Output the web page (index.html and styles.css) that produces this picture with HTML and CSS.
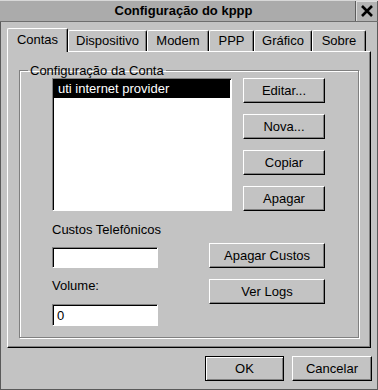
FILE: index.html
```html
<!DOCTYPE html>
<html lang="pt-BR">
<head>
<meta charset="utf-8">
<title>Configuração do kppp</title>
<link rel="stylesheet" href="styles.css">
</head>
<body>
<div class="window">
  <div class="titlebar">
    <div class="title">Configuração do kppp</div>
    <div class="close">
      <svg width="14" height="14" viewBox="0 0 14 14"><path d="M2 2 L12 12 M12 2 L2 12" stroke="#000" stroke-width="2.6" fill="none"/></svg>
    </div>
  </div>
  <div class="body">
    <ul class="tabs">
      <li class="tab active t-contas">Contas</li>
      <li class="tab t-disp">Dispositivo</li>
      <li class="tab t-modem">Modem</li>
      <li class="tab t-ppp">PPP</li>
      <li class="tab t-graf">Gráfico</li>
      <li class="tab t-sobre">Sobre</li>
    </ul>
    <div class="panel">
      <fieldset class="group">
        <legend>Configuração da Conta</legend>
        <div class="group-body">
          <div class="top-row">
            <div class="list">
              <div class="item selected">uti internet provider</div>
            </div>
            <div class="btncol">
              <div class="btn">Editar...</div>
              <div class="btn">Nova...</div>
              <div class="btn">Copiar</div>
              <div class="btn">Apagar</div>
            </div>
          </div>
          <div class="bottom-row">
            <div class="fields">
              <div class="lbl">Custos Telefônicos</div>
              <input class="field" type="text" value="">
              <div class="lbl lbl2">Volume:</div>
              <input class="field field2" type="text" value="0">
            </div>
            <div class="btncol wide">
              <div class="btn">Apagar Custos</div>
              <div class="btn">Ver Logs</div>
            </div>
          </div>
        </div>
      </fieldset>
    </div>
    <div class="dialog-buttons">
      <div class="btn default ok">OK</div>
      <div class="btn cancel">Cancelar</div>
    </div>
  </div>
</div>
</body>
</html>
```

FILE: styles.css
```css
* { margin:0; padding:0; box-sizing:border-box; }
body { width:378px; height:390px; background:#c3c3c3; font:13px/16px "Liberation Sans", Helvetica, Arial, sans-serif; color:#000; overflow:hidden; }

.window { width:378px; height:390px; border:1px solid #5a5a5a; border-top:0; background:#c3c3c3; display:flex; flex-direction:column; }

.titlebar { height:22px; display:flex; background:#ababab; border-top:1px solid #d8d8d8; border-bottom:1px solid #6e6e6e; margin:0 -1px; }
.title { flex:1; text-align:center; font-weight:bold; line-height:20px; padding-left:12px; }
.close { width:23px; display:flex; align-items:center; justify-content:center; border-left:1px solid #5c5c5c; border-right:1px solid #5c5c5c; background:#b3b3b3; box-shadow:inset 1px 1px #dcdcdc; }

.body { flex:1; padding:6px 6px 0 6px; display:flex; flex-direction:column; }

.tabs { list-style:none; display:flex; align-items:flex-end; height:23px; position:relative; z-index:1; }
.tab { height:21px; line-height:20px; text-align:center; border:1px solid #fff; border-bottom:0; border-right:1px solid #000; box-shadow:inset -1px 0 #808080; border-radius:2px 2px 0 0; background:#c3c3c3; }
.tab.active { height:24px; margin-bottom:-1px; line-height:22px; }
.t-contas { width:61px; }
.t-disp { width:79px; }
.t-modem { width:62px; }
.t-ppp { width:45px; }
.t-graf { width:58px; }
.t-sobre { width:54px; }

.panel { height:297px; border:1px solid; border-color:#fff #000 #000 #fff; box-shadow:inset -1px -1px #808080; padding:11px 11px 9px 11px; display:flex; flex-direction:column; }

.group { flex:1; border:1px solid #808080; box-shadow:1px 1px #fff, inset 1px 1px #fff; min-width:0; }
.group legend { margin-left:8px; padding:0 2px; line-height:15px; }
.group-body { padding:0 33px 0 32px; }

.top-row { display:flex; }
.list { width:180px; height:133px; background:#fff; border:1px solid; border-color:#808080 #fff #fff #808080; box-shadow:inset 1px 1px #000; padding:1px 1px 0 1px; }
.item { height:18px; line-height:18px; padding-left:4px; white-space:nowrap; }
.item.selected { background:#000; color:#fff; }

.btncol { display:flex; flex-direction:column; gap:11px; width:82px; margin-left:11px; }
.btn { height:25px; line-height:23px; text-align:center; background:#c3c3c3; border:1px solid; border-color:#fff #000 #000 #fff; box-shadow:inset -1px -1px #808080; white-space:nowrap; }

.bottom-row { display:flex; justify-content:space-between; }
.fields { width:106px; }
.lbl { margin-top:11px; white-space:nowrap; }
.lbl2 { margin-top:10px; }
.field { display:block; width:106px; height:21px; margin-top:9px; border:1px solid; border-color:#808080 #fff #fff #808080; box-shadow:inset 1px 1px #000; background:#fff; font:13px "Liberation Sans", Helvetica, Arial, sans-serif; padding:0 4px; outline:none; }
.field2 { height:22px; margin-top:10px; }
.btncol.wide { width:116px; margin-top:32px; }

.dialog-buttons { display:flex; justify-content:flex-end; gap:8px; margin-top:8px; margin-right:-1px; }
.ok { width:79px; }
.cancel { width:80px; }
.btn.default { border-color:#000; box-shadow:inset 1px 1px #fff, inset -1px -1px #808080; }
```
